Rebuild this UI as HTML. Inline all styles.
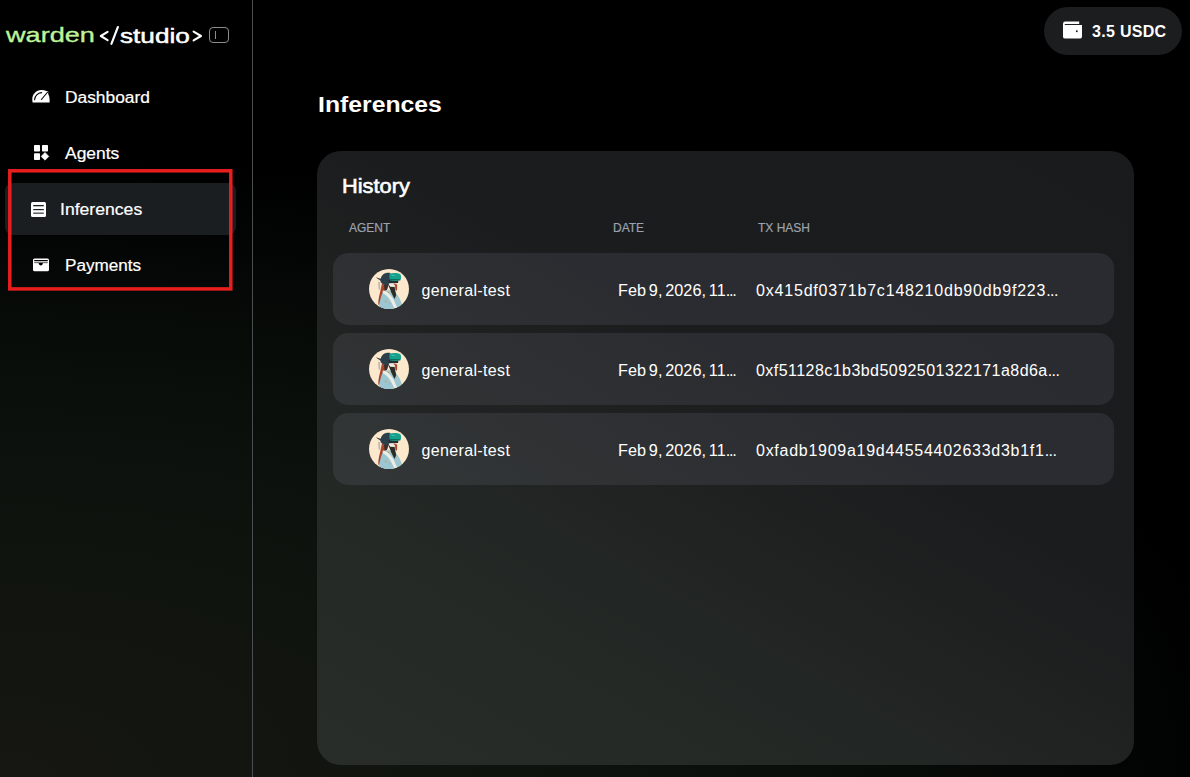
<!DOCTYPE html>
<html><head><meta charset="utf-8">
<style>
*{margin:0;padding:0;box-sizing:border-box}
html,body{width:1190px;height:777px;overflow:hidden}
body{position:relative;font-family:"Liberation Sans",sans-serif;color:#fff;
 background:#000;}
.bg{position:absolute;left:0;top:0;width:1190px;height:777px;
 background:radial-gradient(1250px 620px at 0px 777px, #161612 0%, #121510 22%, #0e130e 42%, #0b100c 58%, #070b08 75%, #030504 88%, #000 100%);}
.t{position:absolute;white-space:nowrap;line-height:20px}
.side-line{position:absolute;left:252px;top:0;width:1px;height:777px;background:#4a4e50}
.active{position:absolute;left:5px;top:183px;width:231px;height:52px;border-radius:8px;background:#1b1e20}
.redbox{position:absolute;left:8px;top:169px;width:225px;height:122px;border:3px solid #ee1d1d}
.pill{position:absolute;left:1044px;top:7px;width:138px;height:48px;border-radius:24px;background:#1c1d1f}
.card{position:absolute;left:317px;top:151px;width:817px;height:614px;border-radius:24px;
 background:linear-gradient(30deg,#292d2a 0%,#262a27 18%,#222624 33%,#1e2120 47%,#1b1c1e 60%,#1a1b1d 100%)}
.row{position:absolute;left:333px;width:781px;height:72px;border-radius:15px;background:rgba(200,206,235,0.095)}
.nav{font-size:16px;-webkit-text-stroke:0.2px #fff}
.hdr{font-size:12px;color:#9ca3af;-webkit-text-stroke:0.2px #9ca3af}
.cell{font-size:16px}
.av{position:absolute;width:40px;height:40px}
</style></head><body>
<div class="bg"></div>
<div class="side-line"></div>

<!-- logo -->
<div class="t" style="left:6px;top:25px;font-size:21px;color:#bff39a;-webkit-text-stroke:0.35px #bff39a;transform-origin:0 0;transform:scaleX(1.29)">warden</div>
<svg style="position:absolute;left:0;top:0" width="240" height="60" viewBox="0 0 240 60">
 <polyline points="107.6,31.9 100.8,36 107.6,40.1" fill="none" stroke="#fff" stroke-width="2.1" stroke-linecap="round" stroke-linejoin="round"/>
 <line x1="117.9" y1="27" x2="111.4" y2="43.8" stroke="#fff" stroke-width="2.1" stroke-linecap="round"/>
 <polyline points="193.6,31.6 201,36 193.6,40.4" fill="none" stroke="#fff" stroke-width="2.1" stroke-linecap="round" stroke-linejoin="round"/>
</svg>
<div class="t" style="left:119.8px;top:25.5px;font-size:21px;color:#fff;-webkit-text-stroke:0.5px #fff;transform-origin:0 0;transform:scaleX(1.245)">studio</div>
<div style="position:absolute;left:209px;top:27px;width:20px;height:16px;border:1.8px solid #8c8c8c;border-radius:4px"></div>
<div style="position:absolute;left:214.5px;top:31px;width:1.8px;height:7.5px;background:#8c8c8c"></div>

<!-- nav -->
<div class="active"></div>
<svg style="position:absolute;left:31px;top:89px" width="20" height="15" viewBox="0 0 20 15">
 <path d="M1.6 13.6 L18.6 13.6 L18.6 10.2 C18.5 8.2 18 6.4 17.1 4.8 L17.3 3 C17.3 2.2 16.6 1.9 16 2.3 C14.3 1.5 12.3 1.1 10.3 1.1 C5.4 1.1 1.3 5.2 1.3 10.1 C1.3 11.4 1.4 12.6 1.6 13.6 Z" fill="#fff"/>
 <path d="M3.6 10.7 C3.8 6.9 6.8 3.9 10.6 3.6" stroke="#000" stroke-width="1.15" fill="none" stroke-linecap="round"/>
 <path d="M10.4 10.5 L16.7 3" stroke="#000" stroke-width="1.1" fill="none" stroke-linecap="round"/>
</svg>
<div class="t nav" style="left:64.8px;top:88px;transform-origin:0 0;transform:scaleX(1.085)">Dashboard</div>

<svg style="position:absolute;left:33px;top:144px" width="17" height="17" viewBox="0 0 17 17">
 <rect x="1" y="1" width="6" height="6.5" rx="0.8" fill="#fff"/>
 <rect x="9" y="1" width="6" height="6.5" rx="0.8" fill="#fff"/>
 <rect x="1" y="9.2" width="6" height="6.8" rx="0.8" fill="#fff"/>
 <path d="M12 8.4 L15.8 12.4 L12 16.2 L8.2 12.4 Z" fill="#fff" stroke="#fff" stroke-width="0.6" stroke-linejoin="round"/>
</svg>
<div class="t nav" style="left:65px;top:144px;transform-origin:0 0;transform:scaleX(1.09)">Agents</div>

<svg style="position:absolute;left:30px;top:201px" width="17" height="17" viewBox="0 0 17 17">
 <rect x="1" y="1" width="15" height="15" rx="1.5" fill="#fff"/>
 <rect x="3.2" y="4.0" width="10.6" height="1.3" fill="#1b1e20"/>
 <rect x="3.2" y="8.0" width="10.6" height="1.2" fill="#1b1e20"/>
 <rect x="3.2" y="11.5" width="10.6" height="1.4" fill="#505356"/>
</svg>
<div class="t nav" style="left:60px;top:200.2px;transform-origin:0 0;transform:scaleX(1.1)">Inferences</div>

<svg style="position:absolute;left:32px;top:257px" width="18" height="16" viewBox="0 0 18 16">
 <rect x="1" y="1.5" width="16" height="12.8" rx="1.6" fill="#fff"/>
 <rect x="2.2" y="3" width="13.6" height="1" fill="#000"/>
 <rect x="2.2" y="4.6" width="13.6" height="1.6" fill="#777"/>
 <path d="M6.7 6 L10.9 6 C10.8 7.4 10 8.4 8.8 8.4 C7.6 8.4 6.8 7.4 6.7 6 Z" fill="#000"/>
</svg>
<div class="t nav" style="left:65px;top:256.2px;transform-origin:0 0;transform:scaleX(1.07)">Payments</div>

<svg style="position:absolute;left:0;top:160px" width="245" height="140"><rect x="9.8" y="10.8" width="221" height="118.1" fill="none" stroke="#e81e1e" stroke-width="3.5"/></svg>

<!-- top right pill -->
<div class="pill"></div>
<svg style="position:absolute;left:1062px;top:21px" width="21" height="19" viewBox="0 0 21 19">
 <rect x="1" y="0.6" width="19" height="17" rx="2.2" fill="#fff"/>
 <path d="M17.2 0 L21 0 L21 3 L17.2 3 Z" fill="#1c1d1f"/>
 <path d="M2.8 3.2 C2.9 3.05 3.2 3 3.6 3 L21 3 L21 4 L2.6 4 Z" fill="#1c1d1f"/>
 <circle cx="14.8" cy="10.3" r="0.95" fill="#1c1d1f"/>
</svg>
<div class="t" style="left:1092px;top:21.5px;font-size:16px;font-weight:bold;letter-spacing:0.3px">3.5 USDC</div>

<!-- heading -->
<div class="t" style="left:318px;top:94.5px;font-size:22px;font-weight:bold;transform-origin:0 0;transform:scaleX(1.125)">Inferences</div>

<!-- card -->
<div class="card"></div>
<div class="t" style="left:341.5px;top:176px;font-size:20px;-webkit-text-stroke:0.6px #fff;transform-origin:0 0;transform:scaleX(1.09)">History</div>
<div class="t hdr" style="left:349px;top:217.7px">AGENT</div>
<div class="t hdr" style="left:613px;top:217.7px">DATE</div>
<div class="t hdr" style="left:758px;top:217.7px">TX HASH</div>

<div class="row" style="top:253px"></div>
<div class="row" style="top:333px"></div>
<div class="row" style="top:413px"></div>

<svg class="av" style="left:369px;top:269px" width="40" height="40" viewBox="0 0 40 40">
<defs><clipPath id="c0"><circle cx="20" cy="20" r="20"/></clipPath></defs>
<g clip-path="url(#c0)">
<rect width="40" height="40" fill="#fce8cd"/>
<path d="M13 14 C12 19 11 24 10 28 C9.5 31 9 33 9.5 36 L11.5 35 L13.5 28 L16.5 21.5 L19.5 16 Z" fill="#a9442e"/><path d="M15 15 L19.5 16 L18 21 L15.5 22 Z" fill="#3b2f2c"/>
<path d="M9.2 12.8 L10.9 13 L11.3 20.5 L9.7 20.8 Z" fill="#b9b8b0"/>
<path d="M9.5 40 C10.5 33 12 26 14.5 22 C18 20.5 23 21 26.5 24 C29.5 27 32 31 33 36 L33 40 Z" fill="#9cc6d1"/>
<path d="M19.5 16.5 L25.5 17.5 L27.2 26 L25.5 30 L22.5 24 Z" fill="#2b2b2a"/>
<path d="M13.8 21.6 C18 22 21.5 25.5 24.5 30.5 L28.6 39.5 L25.8 40 L22 32.5 C19.8 28.5 17 25.5 13.8 24.2 Z" fill="#eceee6"/>
<path d="M20.6 14 L26 14 C26.5 15.2 26.3 17 25 18 L21 17.8 Z" fill="#f0e9de"/>
<circle cx="25.4" cy="15.3" r="0.7" fill="#c0462e"/>
<path d="M26 14.6 L28.2 15.8 L28 21.8 L26.4 20.8 Z" fill="#a9442e"/>
<path d="M11.8 13.5 C10.8 9 13 5 17 4 C19 3.5 20.5 3.6 21.2 3.9 L21.5 11 C20.5 12.5 20 14 19.8 16.5 C17 16 14 15.5 11.8 13.5 Z" fill="#2d3f4b"/>
<path d="M6.6 8.2 L13.5 10.2 L13 12.8 Z" fill="#2d3f4b"/>
<path d="M19.5 11 L29.5 11.4 L29 14.1 L20 14.2 Z" fill="#232e35"/>
<path d="M20.6 4.6 C24 3.6 29 3.8 31.4 5.2 C32.3 6.8 32.3 9.8 31.3 11.3 C27.5 12 23.5 11.8 21 11.2 C20.2 9 20.2 6.6 20.6 4.6 Z" fill="#17a08c"/>
<path d="M21.2 10.6 L31.2 10.9" stroke="#0d5f55" stroke-width="1" fill="none"/>
<path d="M22.5 6.2 L26 6.6" stroke="#62dcc8" stroke-width="0.6" fill="none"/>
<circle cx="16.8" cy="32.5" r="0.9" fill="#d4a646"/>
<circle cx="19.5" cy="23.3" r="0.7" fill="#d4a646"/>
<circle cx="28.2" cy="27.1" r="0.7" fill="#d4a646"/>
<circle cx="20.6" cy="34.7" r="0.7" fill="#d4a646"/>
</g></svg>
<div class="t cell" style="left:421.5px;top:280.9px;letter-spacing:0.35px">general-test</div>
<div class="t cell" style="left:618px;top:280.9px;word-spacing:-1.6px;transform-origin:0 0;transform:scaleX(1.015)">Feb 9, 2026, 11<span style="letter-spacing:-1.2px">...</span></div>
<div class="t cell" style="left:756px;top:280.9px;letter-spacing:0.81px">0x415df0371b7c148210db90db9f223<span style="letter-spacing:-0.6px">...</span></div>
<svg class="av" style="left:369px;top:349px" width="40" height="40" viewBox="0 0 40 40">
<defs><clipPath id="c1"><circle cx="20" cy="20" r="20"/></clipPath></defs>
<g clip-path="url(#c1)">
<rect width="40" height="40" fill="#fce8cd"/>
<path d="M13 14 C12 19 11 24 10 28 C9.5 31 9 33 9.5 36 L11.5 35 L13.5 28 L16.5 21.5 L19.5 16 Z" fill="#a9442e"/><path d="M15 15 L19.5 16 L18 21 L15.5 22 Z" fill="#3b2f2c"/>
<path d="M9.2 12.8 L10.9 13 L11.3 20.5 L9.7 20.8 Z" fill="#b9b8b0"/>
<path d="M9.5 40 C10.5 33 12 26 14.5 22 C18 20.5 23 21 26.5 24 C29.5 27 32 31 33 36 L33 40 Z" fill="#9cc6d1"/>
<path d="M19.5 16.5 L25.5 17.5 L27.2 26 L25.5 30 L22.5 24 Z" fill="#2b2b2a"/>
<path d="M13.8 21.6 C18 22 21.5 25.5 24.5 30.5 L28.6 39.5 L25.8 40 L22 32.5 C19.8 28.5 17 25.5 13.8 24.2 Z" fill="#eceee6"/>
<path d="M20.6 14 L26 14 C26.5 15.2 26.3 17 25 18 L21 17.8 Z" fill="#f0e9de"/>
<circle cx="25.4" cy="15.3" r="0.7" fill="#c0462e"/>
<path d="M26 14.6 L28.2 15.8 L28 21.8 L26.4 20.8 Z" fill="#a9442e"/>
<path d="M11.8 13.5 C10.8 9 13 5 17 4 C19 3.5 20.5 3.6 21.2 3.9 L21.5 11 C20.5 12.5 20 14 19.8 16.5 C17 16 14 15.5 11.8 13.5 Z" fill="#2d3f4b"/>
<path d="M6.6 8.2 L13.5 10.2 L13 12.8 Z" fill="#2d3f4b"/>
<path d="M19.5 11 L29.5 11.4 L29 14.1 L20 14.2 Z" fill="#232e35"/>
<path d="M20.6 4.6 C24 3.6 29 3.8 31.4 5.2 C32.3 6.8 32.3 9.8 31.3 11.3 C27.5 12 23.5 11.8 21 11.2 C20.2 9 20.2 6.6 20.6 4.6 Z" fill="#17a08c"/>
<path d="M21.2 10.6 L31.2 10.9" stroke="#0d5f55" stroke-width="1" fill="none"/>
<path d="M22.5 6.2 L26 6.6" stroke="#62dcc8" stroke-width="0.6" fill="none"/>
<circle cx="16.8" cy="32.5" r="0.9" fill="#d4a646"/>
<circle cx="19.5" cy="23.3" r="0.7" fill="#d4a646"/>
<circle cx="28.2" cy="27.1" r="0.7" fill="#d4a646"/>
<circle cx="20.6" cy="34.7" r="0.7" fill="#d4a646"/>
</g></svg>
<div class="t cell" style="left:421.5px;top:360.9px;letter-spacing:0.35px">general-test</div>
<div class="t cell" style="left:618px;top:360.9px;word-spacing:-1.6px;transform-origin:0 0;transform:scaleX(1.015)">Feb 9, 2026, 11<span style="letter-spacing:-1.2px">...</span></div>
<div class="t cell" style="left:756px;top:360.9px;letter-spacing:0.45px">0xf51128c1b3bd5092501322171a8d6a<span style="letter-spacing:-0.6px">...</span></div>
<svg class="av" style="left:369px;top:429px" width="40" height="40" viewBox="0 0 40 40">
<defs><clipPath id="c2"><circle cx="20" cy="20" r="20"/></clipPath></defs>
<g clip-path="url(#c2)">
<rect width="40" height="40" fill="#fce8cd"/>
<path d="M13 14 C12 19 11 24 10 28 C9.5 31 9 33 9.5 36 L11.5 35 L13.5 28 L16.5 21.5 L19.5 16 Z" fill="#a9442e"/><path d="M15 15 L19.5 16 L18 21 L15.5 22 Z" fill="#3b2f2c"/>
<path d="M9.2 12.8 L10.9 13 L11.3 20.5 L9.7 20.8 Z" fill="#b9b8b0"/>
<path d="M9.5 40 C10.5 33 12 26 14.5 22 C18 20.5 23 21 26.5 24 C29.5 27 32 31 33 36 L33 40 Z" fill="#9cc6d1"/>
<path d="M19.5 16.5 L25.5 17.5 L27.2 26 L25.5 30 L22.5 24 Z" fill="#2b2b2a"/>
<path d="M13.8 21.6 C18 22 21.5 25.5 24.5 30.5 L28.6 39.5 L25.8 40 L22 32.5 C19.8 28.5 17 25.5 13.8 24.2 Z" fill="#eceee6"/>
<path d="M20.6 14 L26 14 C26.5 15.2 26.3 17 25 18 L21 17.8 Z" fill="#f0e9de"/>
<circle cx="25.4" cy="15.3" r="0.7" fill="#c0462e"/>
<path d="M26 14.6 L28.2 15.8 L28 21.8 L26.4 20.8 Z" fill="#a9442e"/>
<path d="M11.8 13.5 C10.8 9 13 5 17 4 C19 3.5 20.5 3.6 21.2 3.9 L21.5 11 C20.5 12.5 20 14 19.8 16.5 C17 16 14 15.5 11.8 13.5 Z" fill="#2d3f4b"/>
<path d="M6.6 8.2 L13.5 10.2 L13 12.8 Z" fill="#2d3f4b"/>
<path d="M19.5 11 L29.5 11.4 L29 14.1 L20 14.2 Z" fill="#232e35"/>
<path d="M20.6 4.6 C24 3.6 29 3.8 31.4 5.2 C32.3 6.8 32.3 9.8 31.3 11.3 C27.5 12 23.5 11.8 21 11.2 C20.2 9 20.2 6.6 20.6 4.6 Z" fill="#17a08c"/>
<path d="M21.2 10.6 L31.2 10.9" stroke="#0d5f55" stroke-width="1" fill="none"/>
<path d="M22.5 6.2 L26 6.6" stroke="#62dcc8" stroke-width="0.6" fill="none"/>
<circle cx="16.8" cy="32.5" r="0.9" fill="#d4a646"/>
<circle cx="19.5" cy="23.3" r="0.7" fill="#d4a646"/>
<circle cx="28.2" cy="27.1" r="0.7" fill="#d4a646"/>
<circle cx="20.6" cy="34.7" r="0.7" fill="#d4a646"/>
</g></svg>
<div class="t cell" style="left:421.5px;top:440.9px;letter-spacing:0.35px">general-test</div>
<div class="t cell" style="left:618px;top:440.9px;word-spacing:-1.6px;transform-origin:0 0;transform:scaleX(1.015)">Feb 9, 2026, 11<span style="letter-spacing:-1.2px">...</span></div>
<div class="t cell" style="left:756px;top:440.9px;letter-spacing:0.73px">0xfadb1909a19d44554402633d3b1f1<span style="letter-spacing:-0.6px">...</span></div>
</body></html>
